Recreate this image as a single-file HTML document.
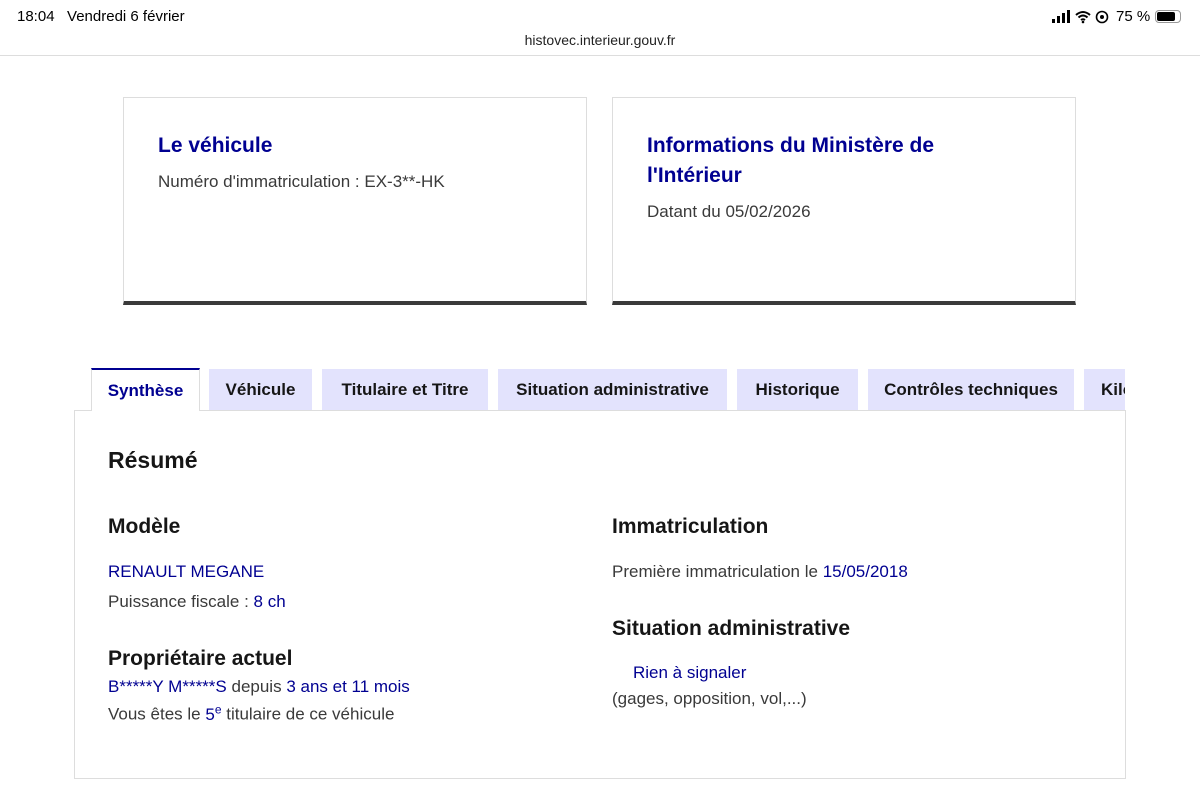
<!DOCTYPE html>
<html><head><meta charset="utf-8"><style>
*{margin:0;padding:0;box-sizing:border-box}
body{width:1200px;height:788px;overflow:hidden;background:#fff;font-family:"Liberation Sans",sans-serif;color:#3a3a3a;position:relative}
.a{position:absolute;white-space:nowrap}
.card{position:absolute;top:97px;height:208px;border:1px solid #ddd;border-bottom:4px solid #3a3a3a;background:#fff}
.ct{position:absolute;color:#000091;font-weight:bold;font-size:21px;line-height:30px}
.tx{font-size:17px;color:#3a3a3a}
.tab{position:absolute;top:369px;height:41px;background:#e3e3fd;color:#161616;font-weight:bold;font-size:17px;line-height:41px;text-align:center}
.b{color:#000091}
h3{position:absolute;font-size:21px;color:#161616;white-space:nowrap}
</style></head><body>
<div class="a" style="left:17px;top:8px;font-size:15px;color:#000">18:04&nbsp;&nbsp; Vendredi 6 février</div>
<svg class="a" style="left:1052px;top:10px" width="62" height="14" viewBox="0 0 62 14">
<rect x="0" y="9" width="3" height="4" fill="#000"/><rect x="5" y="6" width="3" height="7" fill="#000"/><rect x="10" y="3" width="3" height="10" fill="#000"/><rect x="15" y="0" width="3" height="13" fill="#000"/>
<path d="M24 5 Q31 -1 38 5 M26.5 7.5 Q31 3.5 35.5 7.5 M29 10 Q31 8.5 33 10" stroke="#000" stroke-width="2" fill="none"/><circle cx="31" cy="12" r="1.3" fill="#000"/>
<circle cx="50" cy="7" r="5.5" stroke="#000" stroke-width="1.6" fill="none"/><circle cx="50" cy="7" r="2" fill="#000"/>
</svg>
<div class="a" style="left:1116px;top:8px;font-size:15px;color:#000">75 %</div>
<div class="a" style="left:1155px;top:10px;width:26px;height:13px;border:1px solid #999;border-radius:4px;padding:1px"><div style="width:18px;height:9px;background:#000;border-radius:2px"></div></div>
<div class="a" style="left:0;width:1200px;top:32px;text-align:center;font-size:14px;color:#222">histovec.interieur.gouv.fr</div>
<div class="a" style="left:0;top:55px;width:1200px;height:1px;background:#ddd"></div>

<div class="card" style="left:123px;width:464px">
<div class="ct" style="left:34px;top:33px">Le véhicule</div>
<div class="a tx" style="left:34px;top:74px">Numéro d'immatriculation : EX-3**-HK</div>
</div>
<div class="card" style="left:612px;width:464px">
<div class="ct" style="left:34px;top:33px">Informations du Ministère de<br>l'Intérieur</div>
<div class="a tx" style="left:34px;top:104px">Datant du 05/02/2026</div>
</div>

<div class="a" style="left:74px;top:410px;width:1052px;height:369px;border:1px solid #ddd;background:#fff"></div>
<div class="tab" style="left:91px;width:109px;top:368px;height:43px;background:#fff;border:1px solid #ddd;border-top:2px solid #000091;border-bottom:none;color:#000091">Synthèse</div>
<div class="tab" style="left:209px;width:103px">Véhicule</div>
<div class="tab" style="left:322px;width:166px">Titulaire et Titre</div>
<div class="tab" style="left:498px;width:229px">Situation administrative</div>
<div class="tab" style="left:737px;width:121px">Historique</div>
<div class="tab" style="left:868px;width:206px">Contrôles techniques</div>
<div class="tab" style="left:1084px;width:41px;text-align:left;padding-left:17px;overflow:hidden">Kilométrage</div>

<h3 style="left:108px;top:447px;font-size:23px">Résumé</h3>
<h3 style="left:108px;top:515px">Modèle</h3>
<div class="a tx b" style="left:108px;top:562px">RENAULT MEGANE</div>
<div class="a tx" style="left:108px;top:592px">Puissance fiscale : <span class="b">8 ch</span></div>
<h3 style="left:108px;top:647px">Propriétaire actuel</h3>
<div class="a tx" style="left:108px;top:677px"><span class="b">B*****Y M*****S</span> depuis <span class="b">3 ans et 11 mois</span></div>
<div class="a tx" style="left:108px;top:702px">Vous êtes le <span class="b">5<sup style="font-size:12px">e</sup></span> titulaire de ce véhicule</div>

<h3 style="left:612px;top:515px">Immatriculation</h3>
<div class="a tx" style="left:612px;top:562px">Première immatriculation le <span class="b">15/05/2018</span></div>
<h3 style="left:612px;top:617px">Situation administrative</h3>
<div class="a tx b" style="left:633px;top:663px">Rien à signaler</div>
<div class="a tx" style="left:612px;top:689px">(gages, opposition, vol,...)</div>
</body></html>
